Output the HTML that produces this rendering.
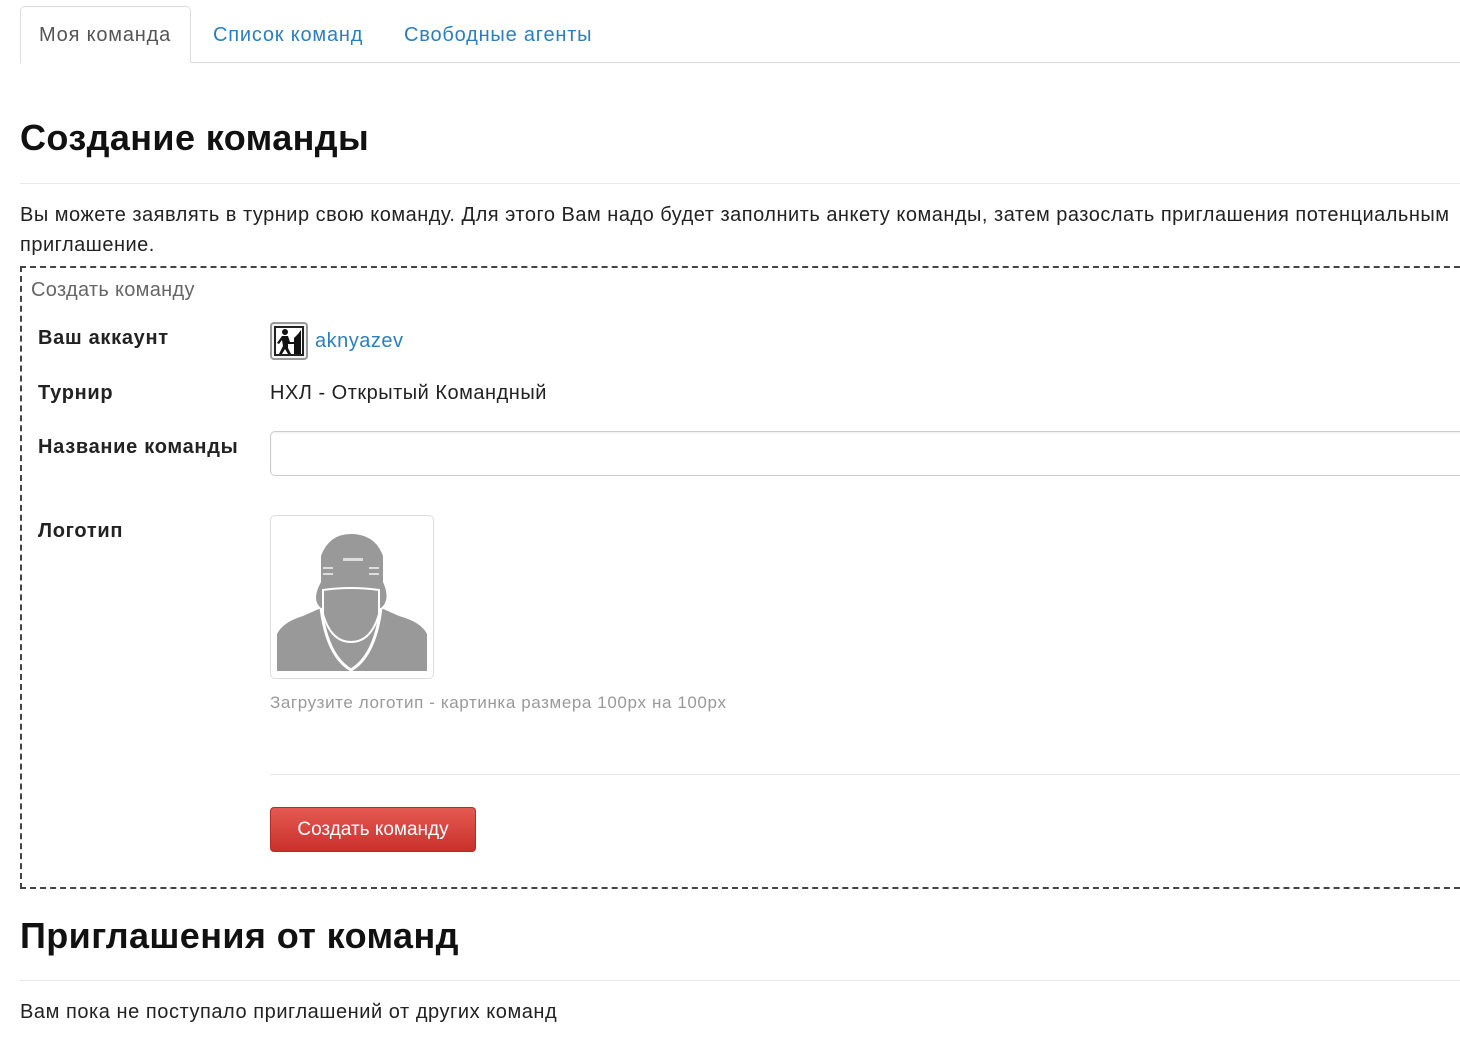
<!DOCTYPE html>
<html><head><meta charset="utf-8"><style>
*{box-sizing:border-box;margin:0;padding:0}
body{width:1460px;height:1052px;background:#fff;font-family:"Liberation Sans",Arial,sans-serif;color:#333;overflow:hidden;position:relative}
.abs{position:absolute;white-space:nowrap}
.tabs{position:absolute;left:20px;top:62px;width:1440px;border-top:1px solid #ddd}
.tab{position:absolute;left:20px;top:6px;width:171px;height:57px;border:1px solid #ddd;border-bottom:none;border-radius:5px 5px 0 0;background:#fff}
h1{position:absolute;font-size:36px;font-weight:bold;color:#111;white-space:nowrap;letter-spacing:0.4px}
.hr{position:absolute;left:20px;width:1440px;border-top:1px solid #e8e8e8}
.t20{font-size:20px;letter-spacing:0.5px}
.tb{font-size:20px;letter-spacing:0.8px}
.lbl{font-size:20px;font-weight:bold;color:#222;letter-spacing:0.7px}
</style></head><body>
<div class="tabs"></div>
<div class="tab"></div>
<div class="abs tb" style="left:39px;top:24px;color:#555">Моя команда</div>
<div class="abs tb" style="left:213px;top:24px;color:#2a7fc0">Список команд</div>
<div class="abs tb" style="left:404px;top:24px;color:#2a7fc0">Свободные агенты</div>
<h1 style="left:20px;top:117px">Создание команды</h1>
<div class="hr" style="top:183px"></div>
<div class="abs t20" style="left:20px;top:204px;color:#222">Вы можете заявлять в турнир свою команду. Для этого Вам надо будет заполнить анкету команды, затем разослать приглашения потенциальным</div>
<div class="abs t20" style="left:20px;top:234px;color:#222">приглашение.</div>
<div style="position:absolute;left:20px;top:266px;width:1460px;height:623px;border:2px dashed #444;border-right:none"></div>
<div class="abs t20" style="left:31px;top:279px;color:#666;letter-spacing:0.3px">Создать команду</div>
<div class="abs lbl" style="left:38px;top:327px">Ваш аккаунт</div>
<div class="abs lbl" style="left:38px;top:382px">Турнир</div>
<div class="abs lbl" style="left:38px;top:436px">Название команды</div>
<div class="abs lbl" style="left:38px;top:520px">Логотип</div>
<div style="position:absolute;left:270px;top:322px;width:38px;height:38px;border:2px solid #999;border-radius:4px;background:#f4f4f4">
<svg width="34" height="34" viewBox="0 0 34 34"><rect x="3" y="3" width="28" height="28" fill="#fff" stroke="#222" stroke-width="2"/><path d="M22 30 L22 14 L26 10 L29 6 L29 30Z" fill="#111"/><circle cx="13" cy="8" r="3" fill="#111"/><path d="M10 12 L16 12 L18 18 L22 18 L22 20 L16 20 L16 24 L19 30 L16 30 L13 25 L10 30 L7 30 L11 22 L10 16 L7 20 L5 19Z" fill="#111"/></svg></div>
<div class="abs t20" style="left:315px;top:330px;color:#2a7fc0">aknyazev</div>
<div class="abs t20" style="left:270px;top:382px;color:#222">НХЛ - Открытый Командный</div>
<div style="position:absolute;left:270px;top:431px;width:1200px;height:45px;border:1px solid #ccc;border-radius:5px;box-shadow:inset 0 1px 2px rgba(0,0,0,.08)"></div>
<div style="position:absolute;left:270px;top:515px;width:164px;height:164px;border:1px solid #ddd;border-radius:5px;background:#fff">
<svg width="162" height="162" viewBox="0 0 162 162"><path d="M6 155 L6 118 Q12 106 32 100 L50 92 Q40 84 50 66 L50 40 Q58 18 80 18 Q104 18 112 40 L112 66 Q120 84 110 92 L128 100 Q150 106 156 118 L156 155Z" fill="#999"/><path d="M50 92 Q56 140 80 154 Q104 140 110 92" fill="none" stroke="#fff" stroke-width="3"/><path d="M52 74 L52 98 Q60 126 80 126 Q100 126 108 98 L108 74 Q80 70 52 74Z" fill="#999" stroke="#fff" stroke-width="2"/><rect x="72" y="42" width="20" height="3" fill="#ddd"/><path d="M52 52 h10 M52 58 h10 M98 52 h10 M98 58 h10" stroke="#ddd" stroke-width="2"/></svg></div>
<div class="abs" style="left:270px;top:693px;font-size:17px;color:#999;letter-spacing:0.6px">Загрузите логотип - картинка размера 100px на 100px</div>
<div class="hr" style="left:270px;width:1190px;top:774px"></div>
<div style="position:absolute;left:270px;top:807px;width:206px;height:45px;background:linear-gradient(#e45a52,#c9302c);border:1px solid #b52b27;border-radius:4px;color:#fff;font-size:19px;text-align:center;line-height:43px">Создать команду</div>
<h1 style="left:20px;top:915px">Приглашения от команд</h1>
<div class="hr" style="top:980px"></div>
<div class="abs t20" style="left:20px;top:1001px;color:#222;letter-spacing:0.55px">Вам пока не поступало приглашений от других команд</div>
</body></html>
